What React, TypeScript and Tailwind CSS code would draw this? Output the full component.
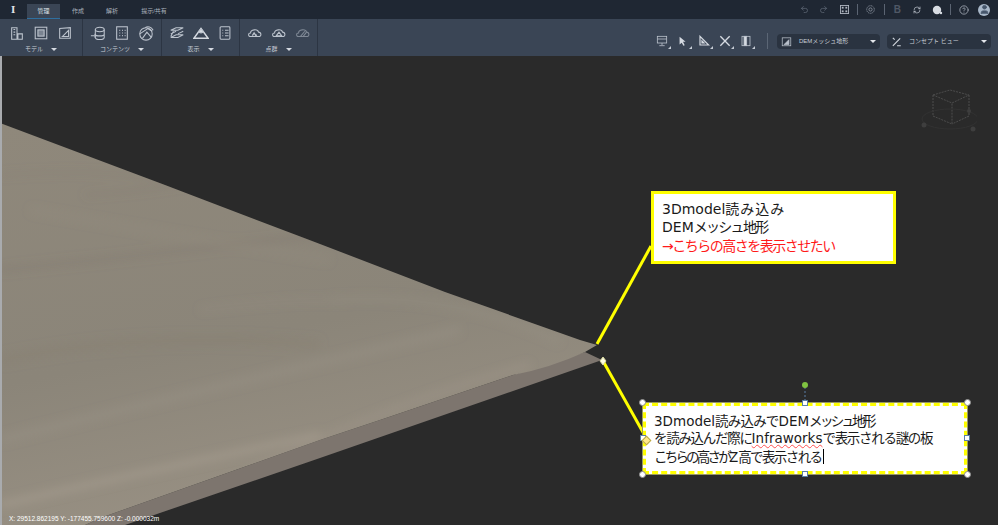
import React from 'react';
import { CircleHelp, Redo2, RefreshCw, Undo2, User } from 'lucide-react';

const jp = "font-['Liberation_Sans','Noto_Sans_CJK_JP',sans-serif]";

const Ico: React.FC<{ children: React.ReactNode; size?: number; className?: string }> = ({ children, size = 16, className }) => (
  <svg width={size} height={size} viewBox="0 0 18 18" fill="none" stroke="#bcc3cd" strokeWidth="1.2" className={className}>
    {children}
  </svg>
);

const Caret = () => <span className="ml-2 h-0 w-0 border-x-[3px] border-t-[3px] border-x-transparent border-t-[#d5dae1]" />;

const RibbonGroup: React.FC<{ label: string; width: string; children: React.ReactNode }> = ({ label, width, children }) => (
  <div className={`flex h-full flex-col items-center border-r border-[#2c3543] ${width}`}>
    <div className="flex h-[24px] w-full items-center justify-center gap-[8px] pt-[3px]">{children}</div>
    <div className="flex h-[12px] items-center text-[6px] text-[#c8ced6]">
      {label}
      <Caret />
    </div>
  </div>
);

const ToolIcon: React.FC<{ children: React.ReactNode }> = ({ children }) => (
  <div className="relative flex h-[18px] w-[21px] items-center justify-start pl-[3px]">
    {children}
    <span className="absolute bottom-[1px] right-[3px] h-0 w-0 border-b-[3px] border-l-[3px] border-b-[#c5ccd5] border-l-transparent" />
  </div>
);

const Picker: React.FC<{ label: string; icon: React.ReactNode; width: string }> = ({ label, icon, width }) => (
  <div className={`flex h-[15px] items-center rounded-sm bg-[#2a3340] pl-[4px] pr-[4px] ${width}`}>
    {icon}
    <span className="ml-[7px] flex-1 text-[6px] text-[#c8ced6]">{label}</span>
    <span className="h-0 w-0 border-x-[3px] border-t-[3px] border-x-transparent border-t-[#e4e7eb]" />
  </div>
);

const Handle: React.FC<{ className: string }> = ({ className }) => (
  <span className={`absolute h-[7px] w-[7px] rounded-full border border-[#8a8a8a] bg-white ${className}`} />
);

const SquareHandle: React.FC<{ className: string }> = ({ className }) => (
  <span className={`absolute h-[6px] w-[6px] border border-[#5b7fa6] bg-white ${className}`} />
);

const surfacePath =
  'M0 123 L165 185 L320 244 L445 292 L580 340 L597 345 L585 352 Q550 368 513 375 L380 420 L320 440 L103 517 L85 525 L0 525 Z';

const streaks: [string, string, number, number][] = [
  ['M0 175 Q120 165 230 192', '#7d776c', 3, 0.3],
  ['M85 195 Q170 190 260 170', '#7b756a', 3, 0.3],
  ['M0 270 Q150 255 320 235', '#797367', 7, 0.22],
  ['M30 210 Q200 240 330 260', '#9a9285', 6, 0.22],
  ['M200 310 Q280 300 330 300', '#9d9588', 4, 0.28],
  ['M0 360 Q150 330 320 345', '#827c70', 12, 0.25],
  ['M0 440 Q200 390 460 330', '#a0988b', 9, 0.25],
  ['M0 505 Q150 470 320 435', '#a59d90', 7, 0.6],
  ['M250 470 Q400 400 530 365', '#a2998c', 6, 0.4],
  ['M330 300 Q450 290 560 342', '#9d9589', 6, 0.3],
];

const App: React.FC = () => {
  return (
    <div className={`flex h-[525px] w-[998px] flex-col overflow-hidden bg-[#2a2a2a] ${jp}`}>
      <header className="flex h-[19px] items-end bg-[#1f2733] pl-[11px]">
        <span className="mb-[4px] w-[16px] font-['Liberation_Serif',serif] text-[11px] font-bold leading-none text-[#e3e6ea]">I</span>
        <nav className="flex h-[15px] items-center text-[6px] text-[#aab2bd]">
          <span className="flex h-full w-[33px] items-center justify-center border-b border-[#2f6f9f] bg-[#3a4555] text-[#dfe3e8]">管理</span>
          <span className="ml-[6px] w-[24px] text-center">作成</span>
          <span className="ml-[10px] w-[24px] text-center">解析</span>
          <span className="ml-[13px] w-[34px] text-center">提示/共有</span>
        </nav>
        <div className="ml-auto flex h-full items-center pr-[8px] text-[#5f6875]">
          <Undo2 size={9} className="mr-[10px]" />
          <Redo2 size={9} className="mr-[12px]" />
          <svg width="9" height="9" viewBox="0 0 10 10" className="mr-[8px]">
            <rect x="0.500" y="0.500" width="9" height="9" fill="none" stroke="#aeb5bf" />
            <rect x="2" y="2" width="2" height="2" fill="#aeb5bf" />
            <rect x="6" y="2" width="2" height="2" fill="#aeb5bf" />
            <rect x="2" y="6" width="2" height="2" fill="#aeb5bf" />
            <rect x="6" y="6" width="2" height="2" fill="#aeb5bf" />
          </svg>
          <span className="mr-[8px] h-[11px] w-px bg-[#5b6472]" />
          <svg width="9" height="9" viewBox="0 0 9 9" className="mr-[9px]" fill="none" stroke="#7f8793">
            <circle cx="4.500" cy="4.500" r="3.800" strokeDasharray="1.200 0.600" />
            <circle cx="4.500" cy="4.500" r="1.600" />
          </svg>
          <span className="mr-[9px] h-[11px] w-px bg-[#5b6472]" />
          <span className="mr-[12px] text-[10px] font-bold leading-none text-[#4f5865]">B</span>
          <RefreshCw size={8} className="mr-[11px] text-[#c6ccd4]" />
          <svg width="11" height="10" viewBox="0 0 11 10" className="mr-[7px]">
            <circle cx="5" cy="5" r="4.200" fill="#d8dce2" />
            <circle cx="9" cy="8" r="1.200" fill="#d8dce2" />
          </svg>
          <span className="mr-[8px] h-[11px] w-px bg-[#5b6472]" />
          <CircleHelp size={10} className="mr-[9px] text-[#a4abb6]" />
          <span className="flex h-[12px] w-[12px] items-center justify-center overflow-hidden rounded-full bg-[#a9b8c9]">
            <User size={11} className="text-[#46566b]" fill="#46566b" />
          </span>
        </div>
      </header>

      <section className="flex h-[37px] items-center bg-[#3a4555] pr-[7px]">
        <RibbonGroup label="モデル" width="w-[83px]">
          <Ico>
            <path d="M3 16V3h6v13zM5 5h2M5 8h2M5 11h2M10 10h5v6h-5z" />
          </Ico>
          <Ico>
            <rect x="2.500" y="2.500" width="13" height="13" />
            <rect x="5.500" y="5.500" width="7" height="7" fill="#7a8391" />
          </Ico>
          <Ico>
            <path d="M3 15V4l12-1v12zM6 13l7-7v7z" />
          </Ico>
        </RibbonGroup>
        <RibbonGroup label="コンテンツ" width="w-[79px]">
          <Ico>
            <ellipse cx="11" cy="5" rx="5" ry="2.500" />
            <path d="M6 5v9c0 3 10 3 10 0V5M6 10c0 3 10 3 10 0M1 12h6M5 10l2 2-2 2" />
          </Ico>
          <Ico>
            <rect x="3" y="2" width="12" height="14" />
            <path d="M6 6h1M9 6h1M12 6h1M6 9h1M9 9h1M12 9h1M6 12h1M9 12h1M12 12h1" strokeWidth="1.400" />
          </Ico>
          <Ico>
            <circle cx="9" cy="10" r="7" />
            <path d="M2 10l9-6 5 3M5 15l5-7 5 6M8 3c3-2 7-1 9 3" />
          </Ico>
        </RibbonGroup>
        <RibbonGroup label="表示" width="w-[78px]">
          <Ico>
            <path d="M2 6l6-3h8l-6 3zM2 10l6-3M2 14l6-3h8l-6 3zM16 7l-6 3M5 7l-3 6" />
          </Ico>
          <Ico>
            <path d="M1 15h16L9 4z" strokeWidth="1.600" stroke="#d5dae1" />
            <path d="M6 8l3-4 3 4-3 1z" fill="#d5dae1" />
          </Ico>
          <Ico>
            <rect x="3.500" y="2" width="11" height="14" rx="1" />
            <path d="M6 6h1M6 9h1M6 12h1M9 6h4M9 9h4M9 12h4" />
          </Ico>
        </RibbonGroup>
        <RibbonGroup label="点群" width="w-[78px]">
          <Ico>
            <path d="M4 13c-3 0-3-4 0-4 0-4 8-5 9-1 3 0 4 5 0 5z" />
            <path d="M6 12l2-3 2 3 1-1" strokeWidth="1.500" />
          </Ico>
          <Ico>
            <path d="M4 13c-3 0-3-4 0-4 0-4 8-5 9-1 3 0 4 5 0 5z" />
            <path d="M6 12l3-4 3 4z" />
          </Ico>
          <Ico>
            <path d="M4 13c-3 0-3-4 0-4 0-4 8-5 9-1 3 0 4 5 0 5z" stroke="#7f8895" />
            <path d="M6 13l5-6M9 13l4-5" stroke="#7f8895" />
          </Ico>
        </RibbonGroup>

        <div className="ml-auto flex items-center pt-[7px]">
          <ToolIcon>
            <Ico size={12}>
              <rect x="2" y="2" width="14" height="10" />
              <path d="M2 6h14M9 12v3M5 16h8" />
            </Ico>
          </ToolIcon>
          <ToolIcon>
            <svg width="12" height="12" viewBox="0 0 14 14"><path d="M3 2l7 6H7l2 4-1.500.6L5.500 9 3 11z" fill="#d5dae1" /></svg>
          </ToolIcon>
          <ToolIcon>
            <Ico size={12}>
              <path d="M3 2v13h13zM6 9v3h3z" strokeWidth="1.800" stroke="#d5dae1" />
            </Ico>
          </ToolIcon>
          <ToolIcon>
            <Ico size={12}>
              <path d="M2 2l14 14M16 2L2 16" strokeWidth="2" stroke="#d5dae1" />
            </Ico>
          </ToolIcon>
          <ToolIcon>
            <Ico size={12}>
              <rect x="3" y="2" width="12" height="14" />
              <rect x="6" y="2" width="4" height="14" fill="#d5dae1" />
            </Ico>
          </ToolIcon>
          <span className="mx-[9px] h-[16px] w-px bg-[#5b6675]" />
          <Picker
            label="DEMメッシュ地形"
            width="w-[103px]"
            icon={
              <Ico size={11}>
                <rect x="2" y="3" width="14" height="13" />
                <path d="M5 14l8-8v8z" fill="#b9c1cc" />
              </Ico>
            }
          />
          <span className="w-[7px]" />
          <Picker
            label="コンセプト ビュー"
            width="w-[104px]"
            icon={
              <Ico size={11}>
                <path d="M3 16L15 4M3 3l3 3M10 16h6" strokeWidth="1.800" stroke="#d5dae1" />
              </Ico>
            }
          />
        </div>
      </section>

      <main className="relative flex-1 overflow-hidden border-l-2 border-[#a9abae] bg-[#2a2a2a]">
        <svg width="998" height="469" viewBox="0 56 998 469" className="absolute left-[-2px] top-0">
          <defs>
            <linearGradient id="surface" x1="0" y1="0" x2="0.300" y2="1">
              <stop offset="0" stopColor="#8f887b" />
              <stop offset="0.6" stopColor="#8b8579" />
              <stop offset="1" stopColor="#989083" />
            </linearGradient>
            <filter id="soft" x="-20%" y="-50%" width="140%" height="200%">
              <feGaussianBlur stdDeviation="4" />
            </filter>
            <clipPath id="terrain">
              <path d={surfacePath} />
            </clipPath>
          </defs>
          <path d="M585 352 L602 360 L320 458 L125 525 L85 525 L103 517 L320 440 L380 420 L513 375 Z" fill="#7d756e" />
          <path d={surfacePath} fill="url(#surface)" />
          <g clipPath="url(#terrain)">
            <g filter="url(#soft)" fill="none">
              {streaks.map(([d, color, width, opacity], i) => (
                <path key={i} d={d} stroke={color} strokeWidth={width} opacity={opacity} />
              ))}
            </g>
          </g>
          <polyline points="597,344 651,246" fill="none" stroke="#ffff00" strokeWidth="3" />
          <polyline points="603,361 644,434" fill="none" stroke="#ffff00" strokeWidth="3" />
          <path d="M603 357l3 4-3 4-3-4z" fill="#fffde0" stroke="#d8d8a0" />
          <line x1="805" y1="387" x2="805" y2="403" stroke="#5b7fa6" strokeDasharray="2 2" />
          <circle cx="805" cy="385" r="3" fill="#7fc241" />
        </svg>

        {/* view cube */}
        <svg width="64" height="50" viewBox="0 0 64 50" className="absolute left-[911px] top-[30px]" fill="none" stroke="#4c4c4c" strokeDasharray="2 1">
          <path d="M20 9l17-5 19 5-17 8zM20 9v21l19 8V17M56 9v21l-17 8" />
          <ellipse cx="37" cy="33" rx="28" ry="10" stroke="#323232" strokeDasharray="none" />
          <circle cx="11" cy="39" r="2.500" fill="#3e3e3e" stroke="none" />
          <circle cx="60" cy="43" r="2.500" fill="#3e3e3e" stroke="none" />
          <circle cx="56" cy="25" r="2" fill="#3e3e3e" stroke="none" />
        </svg>

        <div className="absolute left-[649px] top-[135px] flex h-[73px] w-[245px] items-center border-[3px] border-[#ffff00] bg-white pl-[8px] font-['DejaVu_Sans','Noto_Sans_CJK_JP',sans-serif] text-[14px] leading-[18.500px] text-[#1a1a1a]">
          <div className="whitespace-nowrap">
            <p>
              3Dmodel<span className="tracking-[1px]">読み込み</span>
            </p>
            <p>
              DEM<span className="tracking-[-1.700px]">メッシュ地形</span>
            </p>
            <p className="tracking-[-1.500px] text-[#ff1a1a]">→こちらの高さを表示させたい</p>
          </div>
        </div>

        <div className="absolute left-[641px] top-[347px] h-[71px] w-[324px] whitespace-nowrap border-[3px] border-dashed border-[#ffff00] bg-white pl-[8px] pt-[7px] font-['DejaVu_Sans','Noto_Sans_CJK_JP',sans-serif] text-[13.500px] leading-[17px] text-[#1a1a1a] outline outline-1 outline-[#9a9a60]">
          <p>
            3Dmodel<span className="tracking-[-0.800px]">読み込みで</span>DEM<span className="tracking-[-2.700px]">メッシュ地形</span>
          </p>
          <p>
            <span className="tracking-[-1.300px]">を読み込んだ際に</span>
            <span className="underline decoration-wavy decoration-[#ff5050] decoration-1">Infraworks</span>
            <span className="tracking-[-1.300px]">で表示される謎の板</span>
          </p>
          <p>
            <span className="tracking-[-2.800px]">こちらの高さが</span>Z<span className="tracking-[-1.600px]">高で表示される</span>
            <span className="ml-[2px] inline-block h-[15px] w-px translate-y-[2px] bg-black" />
          </p>
          <Handle className="left-[-7px] top-[-7px]" />
          <Handle className="right-[-7px] top-[-7px]" />
          <Handle className="bottom-[-7px] left-[-7px]" />
          <Handle className="bottom-[-7px] right-[-7px]" />
          <SquareHandle className="left-[156px] top-[-6px]" />
          <SquareHandle className="bottom-[-6px] left-[156px]" />
          <SquareHandle className="left-[-6px] top-[29px]" />
          <SquareHandle className="right-[-6px] top-[29px]" />
          <span className="absolute left-[-3px] top-[31px] h-[7px] w-[7px] rotate-45 border border-[#b9a84a] bg-[#ffe98a]" />
        </div>

        <span className="absolute bottom-[3px] left-[7px] font-['Liberation_Sans',sans-serif] text-[6.500px] leading-none text-white">
          X: 29512.862195 Y: -177455.759600 Z: -0.000032m
        </span>
      </main>
    </div>
  );
};

export default App;
